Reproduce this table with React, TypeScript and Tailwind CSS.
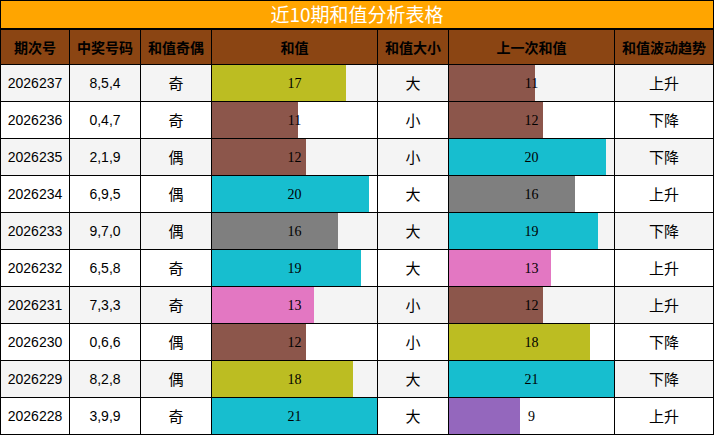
import React from "react";

const rows = [
  { id: "2026237", nums: "8,5,4", oe: "奇", sum: 17, size: "大", prev: 11, trend: "上升" },
  { id: "2026236", nums: "0,4,7", oe: "奇", sum: 11, size: "小", prev: 12, trend: "下降" },
  { id: "2026235", nums: "2,1,9", oe: "偶", sum: 12, size: "小", prev: 20, trend: "下降" },
  { id: "2026234", nums: "6,9,5", oe: "偶", sum: 20, size: "大", prev: 16, trend: "上升" },
  { id: "2026233", nums: "9,7,0", oe: "偶", sum: 16, size: "大", prev: 19, trend: "下降" },
  { id: "2026232", nums: "6,5,8", oe: "奇", sum: 19, size: "大", prev: 13, trend: "上升" },
  { id: "2026231", nums: "7,3,3", oe: "奇", sum: 13, size: "小", prev: 12, trend: "上升" },
  { id: "2026230", nums: "0,6,6", oe: "偶", sum: 12, size: "小", prev: 18, trend: "下降" },
  { id: "2026229", nums: "8,2,8", oe: "偶", sum: 18, size: "大", prev: 21, trend: "下降" },
  { id: "2026228", nums: "3,9,9", oe: "奇", sum: 21, size: "大", prev: 9, trend: "上升" },
];

function colorFor(v: number): string {
  if (v <= 9) return "#9467BD";
  if (v <= 12) return "#8C564B";
  if (v === 13) return "#E377C2";
  if (v <= 16) return "#7F7F7F";
  if (v <= 18) return "#BCBD22";
  return "#17BECF";
}

const cols = "grid grid-cols-[69px_71px_71px_166px_71px_166px_99px]";
const sans = "font-['Liberation_Sans','Noto_Sans_CJK_SC',sans-serif]";
const cjk = "font-['Noto_Sans_CJK_SC',sans-serif]";
const serif = "font-['Liberation_Serif','Noto_Sans_CJK_SC',serif]";

function Bar({ v }: { v: number }) {
  return (
    <div className="relative h-full border-r border-b border-black">
      <div
        className="absolute left-0 top-0 h-full"
        style={{ width: `${(v / 21) * 100}%`, backgroundColor: colorFor(v) }}
      />
      <div className={`relative flex h-full items-center justify-center text-[14px] text-black ${serif}`}>
        {v}
      </div>
    </div>
  );
}

export default function App() {
  const headers = ["期次号", "中奖号码", "和值奇偶", "和值", "和值大小", "上一次和值", "和值波动趋势"];
  return (
    <div className="w-[714px] h-[435px] bg-white">
      <div className="border-l border-t border-black">
        <div
          className={`flex h-[29px] items-center justify-center border-r border-b-2 border-black bg-[#FFA500] text-[19px] text-white ${cjk}`}
        >
          近10期和值分析表格
        </div>
        <div className={`${cols} h-[35px] bg-[#8B4513]`}>
          {headers.map((h) => (
            <div
              key={h}
              className={`flex items-center justify-center border-r border-b border-black text-[14px] font-bold text-black ${cjk}`}
            >
              {h}
            </div>
          ))}
        </div>
        {rows.map((r, i) => (
          <div
            key={r.id}
            className={`${cols} h-[37px] ${i % 2 === 0 ? "bg-[#F4F4F4]" : "bg-white"}`}
          >
            <div className={`flex items-center justify-center border-r border-b border-black text-[14px] text-black ${sans}`}>
              {r.id}
            </div>
            <div className={`flex items-center justify-center border-r border-b border-black text-[14px] text-black ${sans}`}>
              {r.nums}
            </div>
            <div className={`flex items-center justify-center border-r border-b border-black text-[15px] text-black ${cjk}`}>
              {r.oe}
            </div>
            <Bar v={r.sum} />
            <div className={`flex items-center justify-center border-r border-b border-black text-[15px] text-black ${cjk}`}>
              {r.size}
            </div>
            <Bar v={r.prev} />
            <div className={`flex items-center justify-center border-r border-b border-black text-[15px] text-black ${cjk}`}>
              {r.trend}
            </div>
          </div>
        ))}
      </div>
    </div>
  );
}
